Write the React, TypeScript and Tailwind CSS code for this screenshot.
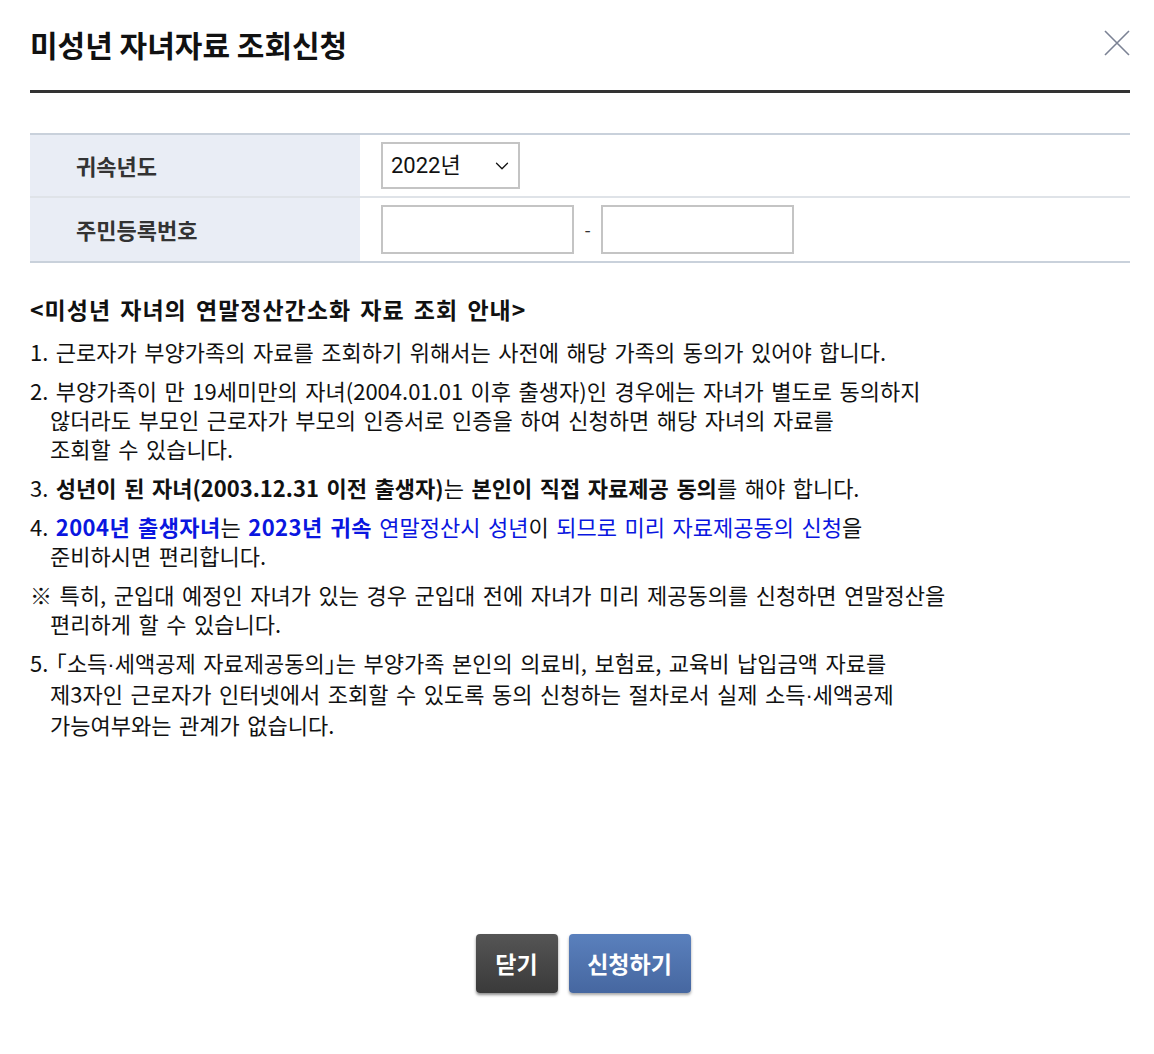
import { ChevronDown } from 'lucide-react';

const font = { fontFamily: '"Noto Sans CJK KR", "Noto Sans", sans-serif' };

export default function App() {
  return (
    <div className="w-[1154px] h-[1054px] bg-white text-[#111] flex flex-col" style={font}>
      {/* Header */}
      <div className="flex items-start justify-between pl-[30px] pr-[22px] pt-[24px]">
        <h1 className="text-[30px] font-bold leading-[40px] text-[#111]">미성년 자녀자료 조회신청</h1>
        <button className="mt-[4px] text-[#7b8294]">
          <svg width="30" height="30" viewBox="0 0 30 30" fill="none" stroke="currentColor" strokeWidth="1.6">
            <path d="M3 3 L27 27 M27 3 L3 27" />
          </svg>
        </button>
      </div>
      <div className="ml-[30px] mr-[24px] mt-[26px] h-[3px] bg-[#333]" />

      {/* Form table */}
      <div className="ml-[30px] mr-[24px] mt-[40px] border-t-2 border-b-2 border-[#c9d1db]">
        <div className="flex h-[63px] border-b-2 border-[#dfe3e8]">
          <div className="w-[332px] bg-[#e9edf5] flex items-center pl-[46px] text-[22px] font-bold text-[#333] border-r-2 border-white">
            귀속년도
          </div>
          <div className="flex-1 flex items-center pl-[19px]">
            <div className="w-[139px] h-[47px] border-2 border-[#c4c4c4] flex items-center justify-between pl-[8px] pr-[5px] text-[22px] text-[#111]" style={{ fontFamily: 'Roboto, "Noto Sans CJK KR", sans-serif' }}>
              <span>2022년</span>
              <ChevronDown size={22} strokeWidth={1.4} />
            </div>
          </div>
        </div>
        <div className="flex h-[63px]">
          <div className="w-[332px] bg-[#e9edf5] flex items-center pl-[46px] text-[22px] font-bold text-[#333] border-r-2 border-white">
            주민등록번호
          </div>
          <div className="flex-1 flex items-center pl-[19px]">
            <div className="w-[193px] h-[49px] border-2 border-[#c4c4c4]" />
            <span className="w-[27px] text-center text-[18px] text-[#333]">-</span>
            <div className="w-[193px] h-[49px] border-2 border-[#c4c4c4]" />
          </div>
        </div>
      </div>

      {/* Guide */}
      <div className="px-[30px] mt-[32px] text-[22px] leading-[29px] [word-spacing:2.6px] text-[#111]">
        <h2 className="font-bold text-[23px] tracking-[1px] [word-spacing:3px] mb-[13px]">&lt;미성년 자녀의 연말정산간소화 자료 조회 안내&gt;</h2>
        <p className="mb-[10px]">1. 근로자가 부양가족의 자료를 조회하기 위해서는 사전에 해당 가족의 동의가 있어야 합니다.</p>
        <p className="mb-[10px] pl-[20px] -indent-[20px]">
          2. 부양가족이 만 19세미만의 자녀(2004.01.01 이후 출생자)인 경우에는 자녀가 별도로 동의하지
          <br />
          않더라도 부모인 근로자가 부모의 인증서로 인증을 하여 신청하면 해당 자녀의 자료를
          <br />
          조회할 수 있습니다.
        </p>
        <p className="mb-[10px]">
          3. <b>성년이 된 자녀(2003.12.31 이전 출생자)</b>는 <b>본인이 직접 자료제공 동의</b>를 해야 합니다.
        </p>
        <p className="mb-[10px] pl-[20px] -indent-[20px]">
          4. <b className="text-[#0a16e0] tracking-[0.4px]">2004년 출생자녀</b>는 <b className="text-[#0a16e0] tracking-[0.4px]">2023년 귀속</b>{' '}
          <span className="text-[#0a16e0]">연말정산시 성년</span>이{' '}
          <span className="text-[#0a16e0]">되므로 미리 자료제공동의 신청</span>을
          <br />
          준비하시면 편리합니다.
        </p>
        <p className="mb-[10px] pl-[20px] -indent-[20px]">
          ※ 특히, 군입대 예정인 자녀가 있는 경우 군입대 전에 자녀가 미리 제공동의를 신청하면 연말정산을
          <br />
          편리하게 할 수 있습니다.
        </p>
        <p className="pl-[20px] -indent-[20px]">
          5. <span className="[font-feature-settings:'halt']">「</span>소득<span className="font-['Liberation_Sans']">·</span>세액공제 자료제공동의<span className="[font-feature-settings:'halt']">」</span>는 부양가족 본인의 의료비, 보험료, 교육비 납입금액 자료를
          <br />
          제3자인 근로자가 인터넷에서 조회할 수 있도록 동의 신청하는 절차로서 실제 소득<span className="font-['Liberation_Sans']">·</span>세액공제
          <br />
          가능여부와는 관계가 없습니다.
        </p>
      </div>

      {/* Buttons */}
      <div className="flex-1" />
      <div className="flex justify-center gap-[11px] mb-[61px] pl-[12px]">
        <button className="w-[82px] h-[59px] rounded-[4px] bg-gradient-to-b from-[#555] to-[#3a3a3a] text-white text-[23px] font-bold shadow-[0_2px_3px_rgba(0,0,0,0.45)]">
          닫기
        </button>
        <button className="w-[122px] h-[59px] rounded-[4px] bg-gradient-to-b from-[#5a80bd] to-[#4667a0] text-white text-[23px] font-bold shadow-[0_2px_3px_rgba(0,0,0,0.35)]">
          신청하기
        </button>
      </div>
    </div>
  );
}
